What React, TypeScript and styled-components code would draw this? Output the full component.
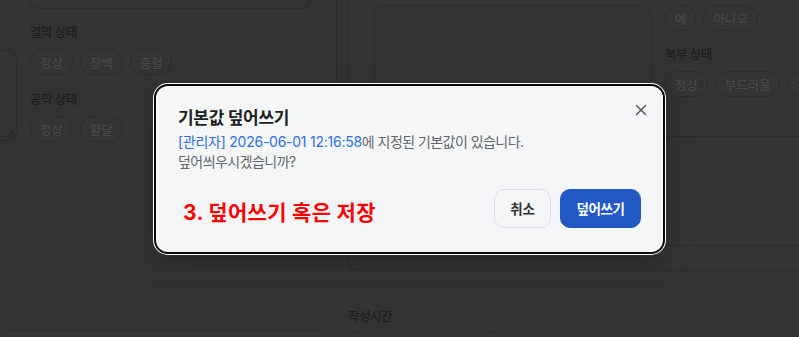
import styled, { createGlobalStyle } from 'styled-components';
import { X } from 'lucide-react';

const GlobalStyle = createGlobalStyle`
  * {
    box-sizing: border-box;
  }
  html, body {
    margin: 0;
    padding: 0;
    background: #333333;
  }
  body {
    font-family: 'Inter', 'Noto Sans CJK KR', sans-serif;
  }
  button {
    font-family: inherit;
  }
`;

const line = '#2b2b2b';

type ChipRowProps = {
  items: string[];
};

const ChipRow = (props: ChipRowProps) => {
  return (
    <Chips>
      {props.items.map((item) => (
        <Chip key={item}>{item}</Chip>
      ))}
    </Chips>
  );
};

const ResizeHandle = () => (
  <svg width="8" height="8" viewBox="0 0 8 8">
    <path d="M7 1L1 7M7 4L4 7" stroke="#1e1e1e" strokeWidth="1" />
  </svg>
);

export default function App() {
  return (
    <>
      <GlobalStyle />
      <Viewport>
        <Page>
          <Cards>
            <LeftCard>
              <TextArea>
                <ResizeHandle />
              </TextArea>
              <Fields>
                <TopInput />
                <FieldGroup>
                  <Label>결막 상태</Label>
                  <ChipRow items={['정상', '창백', '충혈']} />
                </FieldGroup>
                <FieldGroup>
                  <Label>공막 상태</Label>
                  <ChipRow items={['정상', '황달']} />
                </FieldGroup>
              </Fields>
            </LeftCard>
            <RightCard>
              <ImageBox />
              <Fields>
                <Section $height={137}>
                  <FirstRow>
                    <ChipRow items={['예', '아니오']} />
                  </FirstRow>
                  <FieldGroup>
                    <Label>복부 상태</Label>
                    <ChipRow items={['정상', '부드러움', '팽만']} />
                  </FieldGroup>
                </Section>
                <Section $height={109} />
              </Fields>
            </RightCard>
          </Cards>
          <Bottom>
            <BottomLeft>
              <Input $width={360} />
            </BottomLeft>
            <BottomRight>
              <Label>작성시간</Label>
              <Inputs>
                <Input $width={70} />
                <Input $width={70} />
              </Inputs>
            </BottomRight>
          </Bottom>
        </Page>

        <Overlay>
          <Dialog role="dialog">
            <CloseButton aria-label="닫기">
              <X size={18} strokeWidth={2} />
            </CloseButton>
            <Title>기본값 덮어쓰기</Title>
            <Description>
              <Highlight>[관리자] 2026-06-01 12:16:58</Highlight>에 지정된 기본값이
              있습니다.
              <br />
              덮어씌우시겠습니까?
            </Description>
            <Footer>
              <Note>3. 덮어쓰기 혹은 저장</Note>
              <Actions>
                <Button $variant="ghost">취소</Button>
                <Button $variant="primary">덮어쓰기</Button>
              </Actions>
            </Footer>
          </Dialog>
        </Overlay>
      </Viewport>
    </>
  );
}

const Viewport = styled.div`
  position: relative;
  width: 799px;
  height: 337px;
  overflow: hidden;
  background: #333333;
`;

const Page = styled.div`
  display: flex;
  flex-direction: column;
`;

const Cards = styled.div`
  display: grid;
  grid-template-columns: 337px 1fr;
  column-gap: 11px;
  align-items: start;
`;

const LeftCard = styled.div`
  display: grid;
  grid-template-columns: 17px 1fr;
  column-gap: 13px;
  height: 240px;
  padding-right: 26px;
  border-right: 1px solid ${line};
`;

const TextArea = styled.div`
  display: flex;
  align-items: flex-end;
  justify-content: flex-end;
  margin-top: 50px;
  height: 91px;
  padding: 0 2px 2px 0;
  border: 1px solid ${line};
  border-left: none;
  border-radius: 0 10px 10px 0;
`;

const Fields = styled.div`
  display: flex;
  flex-direction: column;
`;

const TopInput = styled.div`
  height: 9px;
  border: 1px solid ${line};
  border-top: none;
  border-radius: 0 0 10px 10px;
  margin-bottom: 15px;
`;

const FieldGroup = styled.div`
  display: flex;
  flex-direction: column;
  gap: 7px;
  margin-bottom: 16px;
`;

const Label = styled.div`
  font-size: 12.5px;
  line-height: 18px;
  font-weight: 500;
  letter-spacing: -0.5px;
  color: #1d1d1d;
`;

const Chips = styled.div`
  display: flex;
  gap: 7px;
`;

const Chip = styled.span`
  display: inline-flex;
  align-items: center;
  height: 26px;
  padding: 0 9px;
  border: 1px solid ${line};
  border-radius: 13px;
  font-size: 12.5px;
  letter-spacing: -0.1px;
  color: #4c4c4c;
  white-space: nowrap;
`;

const RightCard = styled.div`
  display: grid;
  grid-template-columns: 278px 1fr;
  column-gap: 13px;
  height: 271px;
  padding-left: 25px;
  border-left: 1px solid ${line};
  border-bottom: 1px solid ${line};
  border-bottom-left-radius: 10px;
`;

const ImageBox = styled.div`
  margin-top: 5px;
  height: 245px;
  border: 1px solid ${line};
  border-radius: 10px;
`;

const Section = styled.div<{ $height: number }>`
  height: ${(p) => p.$height}px;
  border-bottom: 1px solid ${line};
`;

const FirstRow = styled.div`
  margin: 5px 0 15px;
`;

const Bottom = styled.div`
  display: grid;
  grid-template-columns: 337px 1fr;
  column-gap: 11px;
  margin-top: 12px;
  border-top: 1px solid ${line};
`;

const BottomLeft = styled.div`
  display: flex;
  justify-content: flex-end;
  padding-top: 46px;
  margin-right: 3px;
`;

const BottomRight = styled.div`
  display: flex;
  flex-direction: column;
  gap: 5px;
  padding-top: 24px;
`;

const Inputs = styled.div`
  display: flex;
  gap: 14px;
`;

const Input = styled.div<{ $width: number }>`
  width: ${(p) => p.$width}px;
  height: 36px;
  border: 1px solid ${line};
  border-radius: 10px;
`;

const Overlay = styled.div`
  position: absolute;
  inset: 0;
  display: flex;
  align-items: center;
  justify-content: center;
  padding-left: 20px;
`;

const Dialog = styled.div`
  position: relative;
  width: 511px;
  padding: 20px 22px 24px;
  background: #f5f6f8;
  border: 2px solid #0a0a0a;
  border-radius: 14px;
  box-shadow: 0 0 0 1px #ffffff, 0 8px 24px rgba(0, 0, 0, 0.25);
`;

const CloseButton = styled.button`
  position: absolute;
  top: 15px;
  right: 13px;
  display: flex;
  padding: 0;
  border: none;
  background: none;
  color: #555a60;
`;

const Title = styled.h2`
  margin: 0;
  font-size: 17px;
  line-height: 24px;
  font-weight: 700;
  letter-spacing: -0.3px;
  color: #1c1f24;
`;

const Description = styled.p`
  margin: 2px 0 0;
  font-size: 14px;
  line-height: 20px;
  letter-spacing: -0.55px;
  color: #62666c;
`;

const Highlight = styled.span`
  color: #2f6fe6;
  letter-spacing: -0.25px;
`;

const Footer = styled.div`
  display: flex;
  align-items: center;
  justify-content: space-between;
  margin-top: 17px;
`;

const Note = styled.span`
  padding: 5px 0 0 5px;
  font-size: 21px;
  font-weight: 700;
  letter-spacing: 0.3px;
  color: #ff0000;
`;

const Actions = styled.div`
  display: flex;
  gap: 9px;
`;

const Button = styled.button<{ $variant: 'ghost' | 'primary' }>`
  height: 39px;
  padding: 0 15.5px;
  border-radius: 10px;
  font-size: 13.5px;
  font-weight: 700;
  letter-spacing: -0.4px;
  border: 1px solid ${(p) => (p.$variant === 'primary' ? '#2259c5' : '#dcdfe4')};
  background: ${(p) => (p.$variant === 'primary' ? '#2259c5' : 'transparent')};
  color: ${(p) => (p.$variant === 'primary' ? '#ffffff' : '#33363b')};
`;
